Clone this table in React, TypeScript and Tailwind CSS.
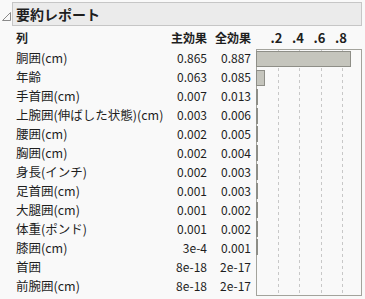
import React from "react";

const rows: [string, string, string, number][] = [
  ["胴囲(cm)", "0.865", "0.887", 0.887],
  ["年齢", "0.063", "0.085", 0.085],
  ["手首囲(cm)", "0.007", "0.013", 0.013],
  ["上腕囲(伸ばした状態)(cm)", "0.003", "0.006", 0.006],
  ["腰囲(cm)", "0.002", "0.005", 0.005],
  ["胸囲(cm)", "0.002", "0.004", 0.004],
  ["身長(インチ)", "0.002", "0.003", 0.003],
  ["足首囲(cm)", "0.001", "0.003", 0.003],
  ["大腿囲(cm)", "0.001", "0.002", 0.002],
  ["体重(ポンド)", "0.001", "0.002", 0.002],
  ["膝囲(cm)", "3e-4", "0.001", 0.001],
  ["首囲", "8e-18", "2e-17", 0],
  ["前腕囲(cm)", "8e-18", "2e-17", 0],
];

const SCALE = 107.5;

export default function App() {
  return (
    <div
      className="w-[365px] h-[299px] bg-[#f9f9f9] text-[#1e1e1e] overflow-hidden"
      style={{ fontFamily: '"Noto Sans CJK JP", "Noto Sans", sans-serif' }}
    >
      <div className="flex items-center pt-[2px]">
        <div className="w-[12px] h-[24px] flex items-center justify-center">
          <svg width="9" height="9" viewBox="0 0 9 9" className="mt-[4px] ml-[1px]">
            <polygon points="0.5,8.5 8.5,8.5 8.5,0.5" fill="none" stroke="#8a8a8a" strokeWidth="1" />
          </svg>
        </div>
        <div className="w-[350px] h-[24px] bg-[#ebebeb] border border-[#c6c6c6] flex items-center pl-[3px]">
          <span className="text-[14px] font-bold leading-none">要約レポート</span>
        </div>
      </div>

      <div className="flex items-center h-[23px] text-[12px] font-bold leading-none">
        <div className="w-[160px] pl-[16px]">列</div>
        <div className="w-[47px] text-right">主効果</div>
        <div className="w-[44px] text-right">全効果</div>
        <div className="relative ml-[5px] w-[106px] h-full">
          {[0.2, 0.4, 0.6, 0.8].map((t) => (
            <span
              key={t}
              className="absolute top-[5px] -translate-x-1/2 text-[13px]"
              style={{ left: t * SCALE - 1 }}
            >
              {"." + Math.round(t * 10)}
            </span>
          ))}
        </div>
      </div>

      <div className="flex">
        <div className="flex flex-col text-[12px] leading-none">
          {rows.map(([name, m, t]) => (
            <div key={name} className="flex items-center h-[19px] pb-[1px]">
              <div className="w-[160px] pl-[16px] whitespace-nowrap text-[12.5px]">{name}</div>
              <div className="w-[47px] text-right">{m}</div>
              <div className="w-[44px] text-right">{t}</div>
            </div>
          ))}
        </div>
        <div className="relative ml-[5px] w-[106px] h-[247px] border border-[#a3a39c] bg-[#f9f9f9] flex flex-col">
          <svg className="absolute inset-0" width="104" height="245">
            {[0.2, 0.4, 0.6, 0.8].map((t) => (
              <line
                key={t}
                x1={Math.round(t * SCALE) - 0.5}
                x2={Math.round(t * SCALE) - 0.5}
                y1={0}
                y2={245}
                stroke="#c8c8c8"
                strokeWidth="1"
                strokeDasharray="3 3"
              />
            ))}
          </svg>
          {rows.map(([name, , , v]) => (
            <div key={name} className="relative flex-1">
              {v > 0 && (
                <div
                  className="absolute top-[1px] left-[-1px] h-[16px] bg-[#c5c5bd] border border-[#8e8e87]"
                  style={{ width: Math.max(2, Math.round(v * SCALE)) }}
                />
              )}
            </div>
          ))}
        </div>
      </div>
    </div>
  );
}
